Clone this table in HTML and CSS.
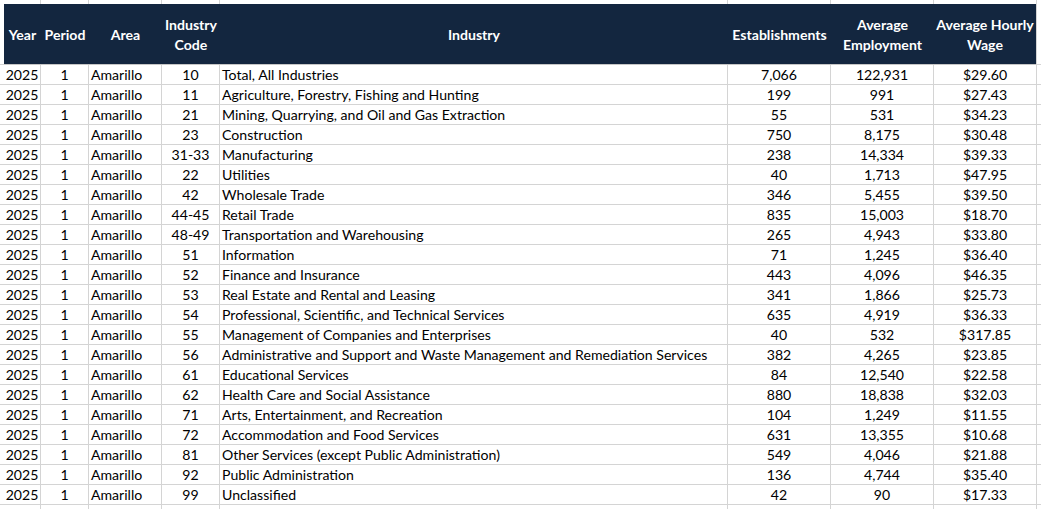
FILE: index.html
```html
<!DOCTYPE html>
<html>
<head>
<meta charset="utf-8">
<link rel="stylesheet" href="styles.css">
</head>
<body>
<div class="sheet">
  <div class="row stub-row">
    <div class="c stub"></div><div class="c"></div><div class="c"></div><div class="c"></div><div class="c"></div><div class="c"></div><div class="c"></div><div class="c"></div><div class="c"></div><div class="c stub-r"></div>
  </div>
  <div class="row head-row">
    <div class="c stub"></div>
    <div class="head">
      <div class="h">Year</div>
      <div class="h">Period</div>
      <div class="h">Area</div>
      <div class="h">Industry<br>Code</div>
      <div class="h">Industry</div>
      <div class="h">Establishments</div>
      <div class="h">Average<br>Employment</div>
      <div class="h">Average Hourly<br>Wage</div>
    </div>
    <div class="c stub-r"></div>
  </div>
  <div id="body"></div>
  <div class="row end-row">
    <div class="c stub"></div><div class="c"></div><div class="c"></div><div class="c"></div><div class="c"></div><div class="c"></div><div class="c"></div><div class="c"></div><div class="c"></div><div class="c stub-r"></div>
  </div>
</div>
<script src="script.js"></script>
</body>
</html>
```
FILE: styles.css
```css
html, body {
  margin: 0;
  padding: 0;
  background: #ffffff;
}
body {
  font-family: Lato, "Open Sans", sans-serif;
  font-size: 14.1px;
  color: #000000;
  overflow: hidden;
}
.sheet {
  width: 1041px;
}
.row {
  display: grid;
  grid-template-columns: 4px 37px 48px 73px 58px 508px 103px 103px 103px 4px;
}
.c {
  box-sizing: border-box;
  border-right: 1px solid #d4d4d4;
  border-bottom: 1px solid #d4d4d4;
  height: 20px;
  line-height: 20px;
  white-space: nowrap;
  overflow: hidden;
}
.c.stub { border-right: none; }
.c.stub-r { border-right: none; }
.stub-row .c { height: 4px; border-bottom: none; }
.end-row .c { height: 5px; border-bottom: none; }
.head-row { height: 61px; }
.head-row .c { height: 61px; }
.head {
  grid-column: 2 / 10;
  display: grid;
  grid-template-columns: 37px 48px 73px 58px 508px 103px 103px 102px;
  background: #13263f;
  border-bottom: 1px solid #c6c6c6;
  box-sizing: border-box;
  height: 61px;
  margin-right: 1px;
}
.head-row .c.stub-r {
  border-left: 1px solid #d4d4d4;
  margin-left: -1px;
}
.h {
  color: #ffffff;
  font-weight: 700;
  text-align: center;
  display: flex;
  align-items: center;
  justify-content: center;
  line-height: 20px;
  padding-top: 2px;
  white-space: nowrap;
}
.ctr { text-align: center; }
.lft { padding-left: 2px; }
```
FILE: script.js
```js
const data = [
  ["10","Total, All Industries","7,066","122,931","$29.60"],
  ["11","Agriculture, Forestry, Fishing and Hunting","199","991","$27.43"],
  ["21","Mining, Quarrying, and Oil and Gas Extraction","55","531","$34.23"],
  ["23","Construction","750","8,175","$30.48"],
  ["31-33","Manufacturing","238","14,334","$39.33"],
  ["22","Utilities","40","1,713","$47.95"],
  ["42","Wholesale Trade","346","5,455","$39.50"],
  ["44-45","Retail Trade","835","15,003","$18.70"],
  ["48-49","Transportation and Warehousing","265","4,943","$33.80"],
  ["51","Information","71","1,245","$36.40"],
  ["52","Finance and Insurance","443","4,096","$46.35"],
  ["53","Real Estate and Rental and Leasing","341","1,866","$25.73"],
  ["54","Professional, Scientific, and Technical Services","635","4,919","$36.33"],
  ["55","Management of Companies and Enterprises","40","532","$317.85"],
  ["56","Administrative and Support and Waste Management and Remediation Services","382","4,265","$23.85"],
  ["61","Educational Services","84","12,540","$22.58"],
  ["62","Health Care and Social Assistance","880","18,838","$32.03"],
  ["71","Arts, Entertainment, and Recreation","104","1,249","$11.55"],
  ["72","Accommodation and Food Services","631","13,355","$10.68"],
  ["81","Other Services (except Public Administration)","549","4,046","$21.88"],
  ["92","Public Administration","136","4,744","$35.40"],
  ["99","Unclassified","42","90","$17.33"]
];
const body = document.getElementById("body");
for (const d of data) {
  const row = document.createElement("div");
  row.className = "row";
  const cells = [
    ["stub", ""],
    ["ctr", "2025"],
    ["ctr", "1"],
    ["lft", "Amarillo"],
    ["ctr", d[0]],
    ["lft", d[1]],
    ["ctr", d[2]],
    ["ctr", d[3]],
    ["ctr", d[4]],
    ["stub-r", ""]
  ];
  for (const [cls, txt] of cells) {
    const c = document.createElement("div");
    c.className = "c " + cls;
    c.textContent = txt;
    row.appendChild(c);
  }
  body.appendChild(row);
}
```
